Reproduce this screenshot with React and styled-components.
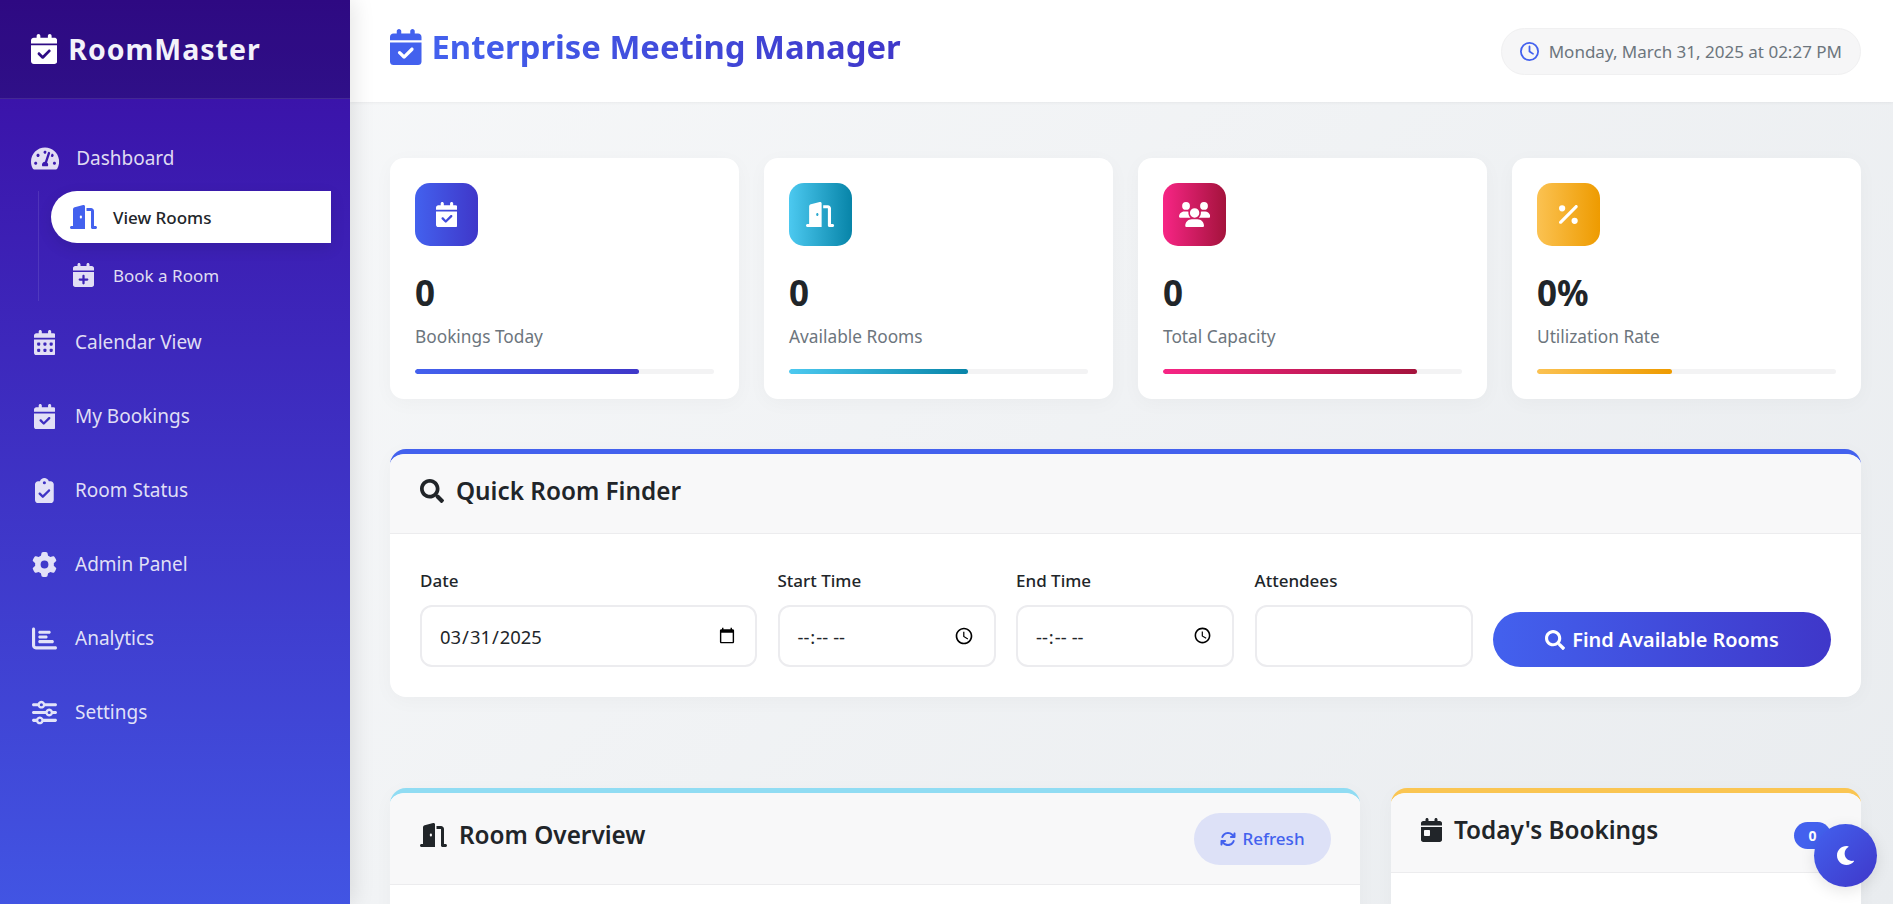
import React from "react";
import styled, { createGlobalStyle } from "styled-components";
import {
  FaCalendarCheck as Fa6CalendarCheck, FaDoorOpen as Fa6DoorOpen, FaCalendarPlus as Fa6CalendarPlus,
  FaCalendarDays, FaClipboardCheck as Fa6ClipboardCheck, FaGear, FaChartBar, FaSliders, FaRegClock,
  FaUsers as Fa6Users, FaPercent as Fa6Percent, FaArrowsRotate, FaCalendarDay as Fa6CalendarDay,
} from "react-icons/fa6";
import { FaTachometerAlt, FaSearch, FaMoon } from "react-icons/fa";

const Global = createGlobalStyle`
  * { box-sizing: border-box; }
  html, body { margin: 0; padding: 0; height: 100%; overflow: hidden; }
  body { font-family: "Noto Sans", "Open Sans", sans-serif; color: #212529; }
  svg { flex: none; }
`;

/* Font Awesome glyphs keep their own proportions: narrow ones and wide ones */
const CalendarCheck = styled(Fa6CalendarCheck)`width: 0.875em;`;
const CalendarPlus = styled(Fa6CalendarPlus)`width: 0.875em;`;
const CalendarGrid = styled(FaCalendarDays)`width: 0.875em;`;
const CalendarDay = styled(Fa6CalendarDay)`width: 0.875em;`;
const ClipboardCheck = styled(Fa6ClipboardCheck)`width: 0.75em;`;
const DoorOpen = styled(Fa6DoorOpen)`width: 1.125em;`;
const Gauge = styled(FaTachometerAlt)`width: 1.125em;`;
const Users = styled(Fa6Users)`width: 1.25em;`;
const Percent = styled(Fa6Percent)`width: 0.75em;`;

const Shell = styled.div`
  display: flex;
  height: 100vh;
  overflow: hidden;
  background: linear-gradient(135deg, #f8f9fa 0%, #e9ecef 100%);
`;

const Sidebar = styled.aside`
  flex: 0 0 350px;
  height: 100%;
  background: linear-gradient(180deg, #3a0ca3 0, #4361ee 1060px);
  box-shadow: 4px 0 20px rgba(0, 0, 0, 0.1);
  position: relative;
  z-index: 2;
`;

const Brand = styled.div`
  height: 99px;
  display: flex;
  align-items: center;
  gap: 11px;
  padding-left: 31px;
  background: rgba(0, 0, 0, 0.2);
  border-bottom: 1px solid rgba(255, 255, 255, 0.1);
  color: #f3f2fa;
  font-size: 28.5px;
  font-weight: 700;
  letter-spacing: 1px;
  svg { font-size: 30px; color: #fff; }
`;

const Nav = styled.nav`
  display: flex;
  flex-direction: column;
  padding-top: 22px;
`;

const IconSlot = styled.span`
  flex: 0 0 ${(p) => p.$w}px;
  display: flex;
  align-items: center;
  justify-content: center;
  font-size: ${(p) => p.$size}px;
`;

const NavItem = styled.a`
  height: 74px;
  display: flex;
  align-items: center;
  gap: 17px;
  padding-left: 31px;
  color: rgba(255, 255, 255, 0.85);
  font-size: 19px;
`;

const SubList = styled.div`
  display: flex;
  flex-direction: column;
  gap: 6px;
  margin: -4px 19px 4px 38px;
  padding-left: 12px;
  border-left: 1px solid rgba(255, 255, 255, 0.1);
`;

const SubItem = styled.a`
  height: 52px;
  display: flex;
  align-items: center;
  gap: 16px;
  padding-left: 19px;
  border-radius: ${(p) => (p.$active ? "26px 0 0 26px" : "0")};
  background: ${(p) => (p.$active ? "#fff" : "transparent")};
  box-shadow: ${(p) => (p.$active ? "0 5px 15px rgba(0, 0, 0, 0.1)" : "none")};
  color: ${(p) => (p.$active ? "#212529" : "rgba(255, 255, 255, 0.85)")};
  font-size: 17px;
  font-weight: ${(p) => (p.$active ? 500 : 400)};
  svg { color: ${(p) => (p.$active ? "#4361ee" : "inherit")}; }
`;

const Main = styled.main`
  flex: 1;
  min-width: 0;
  height: 100%;
  overflow: hidden;
`;

const Topbar = styled.header`
  height: 102px;
  display: flex;
  align-items: center;
  justify-content: space-between;
  padding: 0 32px 0 40px;
  background: #fff;
  box-shadow: 0 1px 3px rgba(0, 0, 0, 0.05);
`;

const PageTitle = styled.h1`
  display: flex;
  align-items: center;
  gap: 10px;
  margin: -8px 0 0;
  font-size: 32.8px;
  font-weight: 700;
  line-height: 1.2;
  svg { font-size: 36px; color: #4361ee; }
  span {
    background: linear-gradient(90deg, #4361ee, #3f37c9);
    -webkit-background-clip: text;
    background-clip: text;
    color: transparent;
  }
`;

const DatePill = styled.div`
  height: 47px;
  display: flex;
  align-items: center;
  gap: 10px;
  padding: 0 18px;
  border-radius: 24px;
  background: #f6f6f7;
  border: 1px solid #f0f0f1;
  color: #6c757d;
  font-size: 17px;
  svg { font-size: 19px; color: #4361ee; }
`;

const Content = styled.div`
  padding: 56px 32px 0 40px;
`;

const StatGrid = styled.section`
  display: grid;
  grid-template-columns: repeat(4, 1fr);
  gap: 25px;
`;

const StatCard = styled.article`
  height: 241px;
  padding: 25px;
  border-radius: 14px;
  background: #fff;
  box-shadow: 0 4px 20px rgba(0, 0, 0, 0.03);
`;

const StatIcon = styled.div`
  width: 63px;
  height: 63px;
  display: flex;
  align-items: center;
  justify-content: center;
  border-radius: 15px;
  background: linear-gradient(90deg, ${(p) => p.$from}, ${(p) => p.$to});
  color: #fff;
  font-size: 25px;
  margin-bottom: 25px;
`;

const StatValue = styled.div`
  font-size: 35px;
  font-weight: 700;
  line-height: 44px;
`;

const StatLabel = styled.div`
  margin-top: 10px;
  font-size: 17.3px;
  line-height: 24px;
  color: #6c757d;
`;

const Track = styled.div`
  height: 5px;
  margin-top: 20px;
  border-radius: 3px;
  background: #f3f3f4;
  overflow: hidden;
`;

const Fill = styled.div`
  height: 100%;
  border-radius: 3px;
  background: linear-gradient(90deg, ${(p) => p.$from}, ${(p) => p.$to});
`;

const Panel = styled.section`
  border-radius: 16px 16px 0 0;
  background: #fff;
  border-top: 5px solid ${(p) => p.$accent};
  box-shadow: 0 4px 20px rgba(0, 0, 0, 0.03);
  overflow: hidden;
`;

const PanelHead = styled.div`
  height: ${(p) => p.$h}px;
  display: flex;
  align-items: center;
  justify-content: space-between;
  padding: 0 ${(p) => p.$pr || 30}px 0 30px;
  background: #f8f8f9;
  border-bottom: 1px solid #ececee;
`;

const PanelTitle = styled.h2`
  display: flex;
  align-items: center;
  gap: 12px;
  margin: ${(p) => p.$mt || 0}px 0 0;
  font-size: 24.3px;
  font-weight: 600;
  line-height: 1.2;
  color: #212529;
  svg { font-size: 24px; }
`;

const PanelBody = styled.div`
  height: 260px;
`;

const FinderPanel = styled(Panel)`
  margin-top: 50px;
  border-radius: 16px;
`;

const FinderForm = styled.form`
  display: grid;
  grid-template-columns: 337fr 218fr 218fr 218fr 338fr;
  column-gap: 20.5px;
  align-items: end;
  padding: 35px 30px 30px;
`;

const Field = styled.label`
  display: flex;
  flex-direction: column;
  gap: 12px;
  font-size: 17px;
  font-weight: 500;
  line-height: 24px;
  color: #212529;
`;

const Input = styled.input`
  width: 100%;
  height: 62px;
  padding: 0 17px;
  border: 2px solid #ececef;
  border-radius: 12px;
  background: #fff;
  font-family: inherit;
  font-size: 18.4px;
  color: #212529;
  outline: none;
`;

const FindButton = styled.button`
  height: 55px;
  display: flex;
  align-items: center;
  justify-content: center;
  gap: 7px;
  border: none;
  border-radius: 28px;
  background: linear-gradient(90deg, #4361ee, #3f37c9);
  color: #fff;
  font-family: inherit;
  font-size: 19.9px;
  font-weight: 600;
  svg { font-size: 20px; }
`;

const LowerGrid = styled.div`
  display: grid;
  grid-template-columns: 970px 470px;
  column-gap: 31px;
  margin-top: 91px;
`;

const RefreshButton = styled.button`
  width: 137px;
  height: 52px;
  display: flex;
  align-items: center;
  justify-content: center;
  gap: 6px;
  border: none;
  border-radius: 26px;
  background: #dde1f7;
  color: #4361ee;
  font-family: inherit;
  font-size: 17px;
  font-weight: 500;
  svg { font-size: 16px; }
`;

const Badge = styled.span`
  width: 37px;
  height: 27px;
  margin-top: 5px;
  display: flex;
  align-items: center;
  justify-content: center;
  border-radius: 14px;
  background: #4361ee;
  color: #fff;
  font-size: 14px;
  font-weight: 700;
`;

const ThemeToggle = styled.button`
  position: fixed;
  right: 16px;
  bottom: 17px;
  width: 63px;
  height: 63px;
  display: flex;
  align-items: center;
  justify-content: center;
  border: none;
  border-radius: 50%;
  background: linear-gradient(135deg, #4361ee, #3f37c9);
  color: #fff;
  font-size: 19px;
  box-shadow: 0 4px 15px rgba(0, 0, 0, 0.1);
  z-index: 5;
`;

const stats = [
  { icon: <CalendarCheck />, value: "0", label: "Bookings Today", from: "#4361ee", to: "#3f37c9", pct: 75 },
  { icon: <DoorOpen />, value: "0", label: "Available Rooms", from: "#4cc9f0", to: "#0784a8", pct: 60 },
  { icon: <Users />, value: "0", label: "Total Capacity", from: "#f72585", to: "#a4133c", pct: 85 },
  { icon: <Percent />, value: "0%", label: "Utilization Rate", from: "#fbc252", to: "#ee9b00", pct: 45 },
];

const navAfter = [
  { icon: <CalendarGrid />, label: "Calendar View" },
  { icon: <CalendarCheck />, label: "My Bookings" },
  { icon: <ClipboardCheck />, label: "Room Status" },
  { icon: <FaGear />, label: "Admin Panel" },
  { icon: <FaChartBar />, label: "Analytics" },
  { icon: <FaSliders />, label: "Settings" },
];

export default function App() {
  return (
    <Shell>
      <Global />
      <Sidebar>
        <Brand><CalendarCheck />RoomMaster</Brand>
        <Nav>
          <NavItem><IconSlot $w={27} $size={25}><Gauge /></IconSlot>Dashboard</NavItem>
          <SubList>
            <SubItem $active><IconSlot $w={27} $size={24}><DoorOpen /></IconSlot>View Rooms</SubItem>
            <SubItem><IconSlot $w={27} $size={24}><CalendarPlus /></IconSlot>Book a Room</SubItem>
          </SubList>
          {navAfter.map((n) => (
            <NavItem key={n.label}><IconSlot $w={27} $size={25}>{n.icon}</IconSlot>{n.label}</NavItem>
          ))}
        </Nav>
      </Sidebar>
      <Main>
        <Topbar>
          <PageTitle><CalendarCheck /><span>Enterprise Meeting Manager</span></PageTitle>
          <DatePill><FaRegClock />Monday, March 31, 2025 at 02:27 PM</DatePill>
        </Topbar>
        <Content>
          <StatGrid>
            {stats.map((s) => (
              <StatCard key={s.label}>
                <StatIcon $from={s.from} $to={s.to}>{s.icon}</StatIcon>
                <StatValue>{s.value}</StatValue>
                <StatLabel>{s.label}</StatLabel>
                <Track>
                  <Fill $from={s.from} $to={s.to} style={{ width: `${s.pct}%` }} />
                </Track>
              </StatCard>
            ))}
          </StatGrid>
          <FinderPanel $accent="#4361ee">
            <PanelHead $h={80}>
              <PanelTitle $mt={-5}><FaSearch />Quick Room Finder</PanelTitle>
            </PanelHead>
            <FinderForm onSubmit={(e) => e.preventDefault()}>
              <Field>Date<Input type="date" defaultValue="2025-03-31" /></Field>
              <Field>Start Time<Input type="time" /></Field>
              <Field>End Time<Input type="time" /></Field>
              <Field>Attendees<Input type="number" /></Field>
              <FindButton type="submit"><FaSearch />Find Available Rooms</FindButton>
            </FinderForm>
          </FinderPanel>
          <LowerGrid>
            <Panel $accent="#90dcf3">
              <PanelHead $h={92} $pr={29}>
                <PanelTitle $mt={-8}><DoorOpen />Room Overview</PanelTitle>
                <RefreshButton><FaArrowsRotate />Refresh</RefreshButton>
              </PanelHead>
              <PanelBody />
            </Panel>
            <Panel $accent="#fac552">
              <PanelHead $h={80}>
                <PanelTitle $mt={-6}><CalendarDay />Today's Bookings</PanelTitle>
                <Badge>0</Badge>
              </PanelHead>
              <PanelBody />
            </Panel>
          </LowerGrid>
        </Content>
      </Main>
      <ThemeToggle><FaMoon /></ThemeToggle>
    </Shell>
  );
}
